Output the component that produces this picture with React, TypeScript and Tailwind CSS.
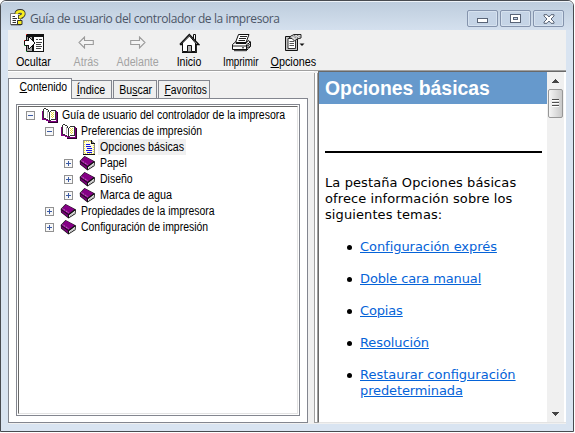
import React from "react";

function Px({ w, h, children, className = "" }: { w: number; h: number; children: React.ReactNode; className?: string }) {
  return (
    <svg width={w} height={h} viewBox={`0 0 ${w} ${h}`} shapeRendering="crispEdges" className={`block shrink-0 ${className}`}>
      {children}
    </svg>
  );
}

function HelpIcon() {
  return (
    <svg width="16" height="17" viewBox="0 0 16 17" className="block shrink-0">
      <path d="M.5 4.5H10.5V15.5H.5Z" fill="#fff" stroke="#777" />
      <path d="M1 15.8H11M2.5 7.5H5M2.5 9.5H7M2.5 11.5H6M2.5 13.5H6" stroke="#333" />
      <path d="M6.6 5Q6.8 2.3 10.3 2.3Q13.6 2.3 13.4 4.9Q13.2 6.8 10.2 7.8V10" fill="none" stroke="#333" strokeWidth="4.4" />
      <path d="M7.5 11.5h4.5v4h-4.5z" fill="#f7ed20" stroke="#333" />
      <path d="M6.6 4.9Q6.8 2.3 10.3 2.3Q13.6 2.3 13.4 4.9Q13.2 6.8 10.2 7.8V9.6" fill="none" stroke="#f7ed20" strokeWidth="2.8" />
    </svg>
  );
}

function HideIcon() {
  return (
    <Px w={20} h={18} className="translate-x-px">
      <path d="M2 0H20V18H2Z" fill="#111" />
      <path d="M3 3H8V17H3Z" fill="#a5a5a5" />
      <path d="M10 3H19V17H10Z" fill="#fff" />
      <path d="M12 5.5H14M15 5.5H18M12 8.5H18M12 10.5H17M12 12.5H18M12 14.5H17" stroke="#444" />
      <path d="M0 6H4V3H6V4H7V5H8V6H9V7H10V8H11V10H10V11H9V12H8V13H7V14H6V15H4V12H0Z" fill="#111" />
      <path d="M1 7H5V4H6V5H7V6H8V7H9V8H10V10H9V11H8V12H7V13H6V14H5V11H1Z" fill="#fff" />
      <path d="M2 0h1v1h-1zM0 6h1v1h-1z" fill="#e22" />
      <path d="M0 11h1v1H0zM2 17h1v1H2z" fill="#2b4" />
    </Px>
  );
}

function Arrow({ right = false }: { right?: boolean }) {
  return (
    <svg width="16" height="13" viewBox="0 0 16 13" className={`block ${right ? "-scale-x-100" : ""}`}>
      <path d="M6.5 1V4.5H15.3V8.5H6.5V12L1 6.5Z" fill="#f4f4f4" stroke="#9b9b9b" strokeWidth="1.1" />
    </svg>
  );
}

function HomeIcon() {
  return (
    <svg width="21" height="20" viewBox="0 0 21 20" className="block">
      <path d="M3.5 10V18.5H16.5V10L10.5 3Z" fill="#fff" stroke="#111" />
      <path d="M14.5 6V1.5H16.5V8.5" fill="#fff" stroke="#111" />
      <path d="M.8 11.5L10.3 1.5L19.8 11.5H17M1 11.5H3.5" fill="none" stroke="#111" strokeWidth="1.3" />
      <path d="M8.5 18.5V12.5H12.5V18.5" fill="#b5b5b5" stroke="#111" />
      <path d="M17.3 11V19.3H3" fill="none" stroke="#111" strokeWidth="1.2" />
    </svg>
  );
}

function PrintIcon() {
  return (
    <svg width="21" height="19" viewBox="0 0 21 19" className="block">
      <path d="M4.5 9.5L7.5 1.5H18L15 9.5Z" fill="#fff" stroke="#111" />
      <path d="M9 3.5H16M8 5.5H15M7.5 7.5H14" stroke="#222" strokeWidth="1.1" />
      <path d="M1.5 11.5L4.5 9H5.5L5 10.5H15L17 7.5L19.5 9L15.5 12V16.5H1.5Z" fill="#fff" stroke="#111" />
      <path d="M15.5 12L19.5 9V13.5L15.5 17.5Z" fill="#555" stroke="#111" />
      <path d="M2 13H15M11 14.8H13M3 17.7H15.5" stroke="#222" />
      <path d="M17 11v5M18.5 10v4" stroke="#ddd" strokeDasharray="1 1" />
    </svg>
  );
}

function OptionsIcon() {
  return (
    <svg width="21" height="20" viewBox="0 0 21 20" className="block translate-x-px">
      <path d="M1.5 3.5H13.5V17.5H1.5Z" fill="#c4c4c4" stroke="#111" />
      <path d="M4 5.5H11.5V15.5H4Z" fill="#fff" stroke="#333" />
      <path d="M5.5 8.5H10M5.5 10.5H10M5.5 12.5H10" stroke="#555" />
      <path d="M5 4.5L7 3L10 1.5H17V5L13 6L10.5 8L8 5.5Z" fill="#ddd" stroke="#222" />
      <path d="M8 2.5L12 5M10 2L14 5M13 2L16 4" stroke="#555" strokeDasharray="1 1" />
      <path d="M15.5 10.5H20.5L18 13Z" fill="#111" />
    </svg>
  );
}

function OpenBook() {
  return (
    <Px w={16} h={15}>
      <path d="M0 3H2V11H5V12H7V13H14V3H15V14H6V13H4V12H0Z" fill="#800080" />
      <path d="M1 1H2V0H4V1H6V2H7V4H8V3H9V2H14V12H9V13H7V12H5V11H2V10H1Z" fill="#333" />
      <path d="M2 1H4V2H6V4H7V12H6V11H4V10H2Z" fill="#fff" />
      <path d="M8 4H9V3H13V11H9V12H8Z" fill="#fff" />
      <path d="M5.5 3V10" stroke="#bbb" />
      <path d="M9.5 4V10M11.5 4V10" stroke="#e6dc3a" strokeDasharray="1 1" />
      <path d="M10.5 5V11" stroke="#e6dc3a" strokeDasharray="1 1" />
      <path d="M15 4H16V15H6V14H15Z" fill="#2b002b" />
    </Px>
  );
}

function ClosedBook() {
  return (
    <svg width="17" height="16" viewBox="0 0 17 16" className="block">
      <path d="M5.5 1L16 6.5L15.5 11L8.5 15.5L1 9.5L.7 6Z" fill="#111" />
      <path d="M5.8 1.5L14.5 6.3L8.5 11L1.4 6.2Z" fill="#850085" />
      <path d="M1.2 7L8 11.7V14.2L1.5 9.2Z" fill="#760076" />
      <path d="M9 12.2L15 7.8V10.2L9 14.2Z" fill="#fff" />
      <path d="M9.5 13.2L15 9.2" stroke="#999" strokeWidth=".7" />
      <path d="M2.6 5.7L9 10" stroke="#e0b0e0" strokeDasharray="1 1" strokeWidth=".9" />
    </svg>
  );
}

function TopicIcon() {
  return (
    <Px w={12} h={15}>
      <path d="M0 0H9V1H10V2H11V3H12V15H0Z" fill="#8d8d8d" />
      <path d="M1 1H8V4H11V14H1Z" fill="#fffde0" />
      <path d="M1 1.5H8M1.5 2V14M2 13.5H11M10.5 5V13" stroke="#efe33c" strokeDasharray="1 1" />
      <path d="M12 3V15M0 14.5H12M8.5 0V3.5H12" fill="none" stroke="#111" />
      <path d="M3 4.5H7M3 6.5H8M4 8.5H9M3 10.5H9M4 12.5H9" stroke="#1313e8" />
    </Px>
  );
}

function Expander({ open }: { open: boolean }) {
  return (
    <Px w={9} h={9}>
      <path d="M.5.5H8.5V8.5H.5Z" fill="#f8f8f8" stroke="#919191" />
      <path d={open ? "M2 4.5H7" : "M2 4.5H7M4.5 2V7"} stroke="#3b5ba5" />
    </Px>
  );
}

type Row = { label: string; pad: string; kind: "open" | "closed" | "topic"; scale: string };
const rows: Row[] = [
  { label: "Guía de usuario del controlador de la impresora", pad: "pl-[7px]", kind: "open", scale: "scale-x-[0.878]" },
  { label: "Preferencias de impresión", pad: "pl-[26px]", kind: "open", scale: "scale-x-[0.868]" },
  { label: "Opciones básicas", pad: "pl-[45px]", kind: "topic", scale: "scale-x-[0.888]" },
  { label: "Papel", pad: "pl-[45px]", kind: "closed", scale: "scale-x-[0.87]" },
  { label: "Diseño", pad: "pl-[45px]", kind: "closed", scale: "scale-x-[0.873]" },
  { label: "Marca de agua", pad: "pl-[45px]", kind: "closed", scale: "scale-x-[0.9]" },
  { label: "Propiedades de la impresora", pad: "pl-[26px]", kind: "closed", scale: "scale-x-[0.871]" },
  { label: "Configuración de impresión", pad: "pl-[26px]", kind: "closed", scale: "scale-x-[0.87]" },
];

function TreeRow({ row }: { row: Row }) {
  return (
    <div className={`flex h-4 items-center ${row.pad}`}>
      <div className="w-[15px] shrink-0">{row.kind !== "topic" && <Expander open={row.kind === "open"} />}</div>
      <div className={`flex w-[19px] shrink-0 ${row.kind === "open" ? "pl-px" : row.kind === "topic" ? "pl-1" : ""}`}>
        {row.kind === "open" ? <OpenBook /> : row.kind === "closed" ? <ClosedBook /> : <TopicIcon />}
      </div>
      <div className={`h-4 w-[88px] pl-0.5 ${row.kind === "topic" ? "bg-[#f0f0f0]" : ""}`}>
        <span className={`block w-max origin-left whitespace-nowrap text-[12px] leading-4 ${row.scale}`}>{row.label}</span>
      </div>
    </div>
  );
}

function Tool({ icon, children, width, scale, off = false }: { icon: React.ReactNode; children: React.ReactNode; width: string; scale: string; off?: boolean }) {
  return (
    <div className={`flex shrink-0 flex-col items-center ${width} ${off ? "text-[#a3a3a3]" : "text-black"}`}>
      <div className="flex h-[22px] items-center justify-center">{icon}</div>
      <span className={`mt-px whitespace-nowrap text-[12px] leading-[16px] ${scale}`}>{children}</span>
    </div>
  );
}

function Tab({ box, text, children }: { box: string; text: string; children: React.ReactNode }) {
  return (
    <div className={`flex shrink-0 justify-center border border-b-0 border-[#83868f] ${box}`}>
      <span className={`whitespace-nowrap ${text}`}>{children}</span>
    </div>
  );
}

function Caption({ children }: { children: React.ReactNode }) {
  return (
    <div className="flex h-[17px] w-[31px] items-center justify-center rounded-[2px] border border-[#8594ad] bg-[#c5d4e6] shadow-[inset_0_0_0_1px_#d6e2ef]">
      {children}
    </div>
  );
}

const links: [string, string][] = [
  ["Configuración exprés", "tracking-[-0.05px]"],
  ["Doble cara manual", "tracking-[-0.12px]"],
  ["Copias", "tracking-[-0.15px]"],
  ["Resolución", "tracking-[-0.1px]"],
];

export default function App() {
  return (
    <div className="h-[433px] w-[575px] overflow-hidden bg-white font-['Liberation_Sans',sans-serif] text-black">
      <div className="flex h-[432px] w-[574px] flex-col rounded-t-[6px] border border-[#484b50] bg-[#d9e4f1] px-[7px] pb-[7px]">
        <header className="-mx-[7px] flex h-[29px] shrink-0 rounded-t-[5px] border-t border-[#eef3f8] bg-linear-to-b from-[#becddd] to-[#d4e0ee] pl-[9px]">
          <div className="pt-[7px]"><HelpIcon /></div>
          <h1 className="pl-[4px] pt-[8px] font-['Open_Sans',sans-serif] text-[12px] leading-[18px] tracking-[-0.4px] whitespace-nowrap text-[#4c5667]">Guía de usuario del controlador de la impresora</h1>
          <div className="ml-auto mr-[9px] flex gap-0.5 pt-[8px]">
            <Caption><Px w={11} h={5} className="translate-y-0.5"><path d="M.5.5H10.5V4.5H.5Z" fill="#fff" stroke="#596477" /></Px></Caption>
            <Caption><Px w={11} h={9}><path d="M.5.5H10.5V8.5H.5Z" fill="#fff" stroke="#596477" /><path d="M3.5 3.5H7.5V5.5H3.5Z" fill="#c5d4e6" stroke="#596477" /></Px></Caption>
            <Caption><svg width="12" height="10" viewBox="0 0 12 10"><path d="M1 .7H4L6 3L8 .7H11V2L8 5L11 8V9.3H8L6 7L4 9.3H1V8L4 5L1 2Z" fill="#fff" stroke="#596477" /></svg></Caption>
          </div>
        </header>

        <main className="flex min-h-0 flex-1 flex-col bg-[#f0f0f0]">
          <nav className="flex h-[41px] shrink-0 border-b border-[#a0a0a0] pt-[2px]">
            <Tool width="w-[50px]" scale="scale-x-[0.9]" icon={<HideIcon />}>Ocultar</Tool>
            <Tool width="w-[56px]" scale="scale-x-[0.89]" off icon={<Arrow />}>Atrás</Tool>
            <Tool width="w-[48px]" scale="scale-x-[0.89]" off icon={<Arrow right />}>Adelante</Tool>
            <Tool width="w-[54px]" scale="scale-x-[0.88]" icon={<HomeIcon />}>Inicio</Tool>
            <Tool width="w-[50px]" scale="scale-x-[0.82]" icon={<PrintIcon />}>Imprimir</Tool>
            <Tool width="w-[54px]" scale="scale-x-[0.9]" icon={<OptionsIcon />}><u>O</u>pciones</Tool>
          </nav>

          <div className="flex min-h-0 flex-1">
            <section className="flex w-[306px] shrink-0 flex-col border-t border-white pr-[6px] pb-px">
              <div className="z-10 mt-[6px] -mb-px flex h-[21px] w-[300px] shrink-0 items-end text-[12px]">
                <Tab box="h-[21px] w-[64px] bg-white pt-[1px] pl-[7px] leading-[15px]" text="scale-x-[0.87]"><u>C</u>ontenido</Tab>
                <Tab box="mb-px h-[18px] w-[40px] border-l-0 bg-[#efefef] leading-[18px]" text="scale-x-[0.89]"><u>Í</u>ndice</Tab>
                <Tab box="mb-px ml-px h-[18px] w-[44px] bg-[#efefef] pl-[2px] leading-[18px]" text="scale-x-[0.88]">Bu<u>s</u>car</Tab>
                <Tab box="mb-px ml-px h-[18px] w-[52px] bg-[#efefef] pl-[3px] leading-[18px]" text="scale-x-[0.86]"><u>F</u>avoritos</Tab>
              </div>
              <div className="flex min-h-0 flex-1 border border-[#83868f] bg-white px-[7px] pt-[5px] pb-[6px]">
                <div className="flex-1 border border-[#83868f] p-px">
                  <div className="h-full border border-t-[#696969] border-r-[#e3e3e3] border-b-[#e3e3e3] border-l-[#696969]">
                    {rows.map((row) => <TreeRow key={row.label} row={row} />)}
                  </div>
                </div>
              </div>
            </section>
            <div className="mt-0.5 mb-px w-[4px] shrink-0 border border-t-0 border-[#a0a0a0] bg-white" />
            <section className="mb-px flex min-w-0 flex-1 border-t border-b border-l border-t-[#696969] border-b-[#e3e3e3] border-l-[#696969]">
              <article className="flex min-w-0 flex-1 flex-col bg-white font-['DejaVu_Sans',sans-serif] text-[13px] leading-4">
                <h2 className="h-8 shrink-0 bg-[#6699cc] pl-[6px] font-['Liberation_Sans',sans-serif] text-[19.4px] leading-[33px] font-bold whitespace-nowrap text-white">Opciones básicas</h2>
                <div className="mt-[47px] ml-[6px] h-0.5 w-[217px] shrink-0 bg-black" />
                <p className="mt-[22px] ml-[6px] tracking-[0.1px] whitespace-nowrap">La pestaña Opciones básicas<br />ofrece información sobre los<br />siguientes temas:</p>
                <ul className="mt-4 flex flex-col gap-4 pl-[28px] text-[#0563d8]">
                  {links.map(([label, track]) => (
                    <li key={label} className="flex items-center">
                      <i className="mr-[8px] size-[5px] rounded-full bg-black" />
                      <a className={`whitespace-nowrap underline ${track}`}>{label}</a>
                    </li>
                  ))}
                  <li className="flex">
                    <i className="mt-[6px] mr-[8px] size-[5px] shrink-0 rounded-full bg-black" />
                    <a className="whitespace-nowrap underline">Restaurar configuración<br /><span className="tracking-[-0.12px]">predeterminada</span></a>
                  </li>
                </ul>
              </article>
              <aside className="flex w-[17px] shrink-0 flex-col items-center bg-[#f0f0f0]">
                <div className="flex h-[17px] items-center"><Px w={7} h={4}><path d="M3 0H4V1H5V2H6V3H7V4H0V3H1V2H2V1H3Z" fill="#444" /></Px></div>
                <div className="flex h-[29px] w-[15px] items-center justify-center rounded-[2px] border border-[#979797] bg-linear-to-r from-[#f5f5f5] to-[#c9c9c9]">
                  <Px w={7} h={9}><path d="M0 .5H7M0 3.5H7M0 6.5H7" stroke="#505050" /><path d="M0 1.5H7M0 4.5H7M0 7.5H7" stroke="#fff" /></Px>
                </div>
                <div className="mt-auto flex h-[17px] items-center"><Px w={7} h={4}><path d="M0 0H7V1H6V2H5V3H4V4H3V3H2V2H1V1H0Z" fill="#444" /></Px></div>
              </aside>
              <div className="w-[2px] shrink-0 bg-white" />
            </section>
          </div>
        </main>
      </div>
    </div>
  );
}
